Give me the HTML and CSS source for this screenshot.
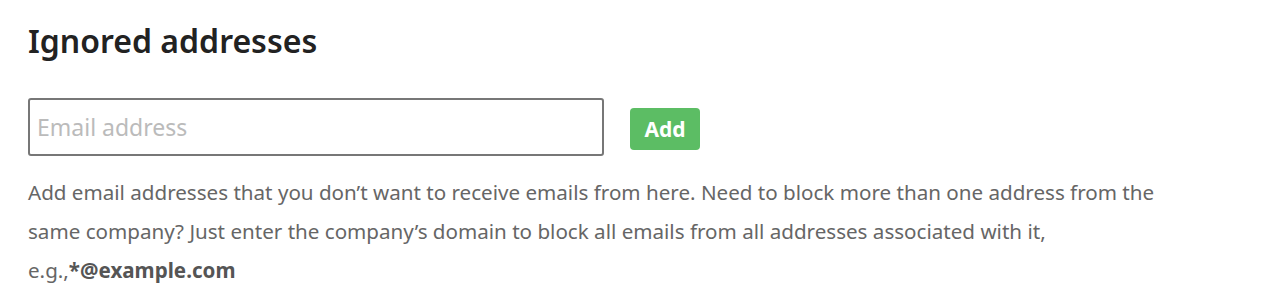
FILE: index.html
```html
<!DOCTYPE html>
<html>
<head>
<meta charset="utf-8">
<link rel="stylesheet" href="styles.css">
</head>
<body>
<div class="section">
  <h2 class="title">Ignored addresses</h2>
  <div class="add-row">
    <input class="email-input" type="text" placeholder="Email address">
    <button class="add-btn" type="button">Add</button>
  </div>
  <p class="help">Add email addresses that you don’t want to receive emails from here. Need to block more than one address from the same company? Just enter the company’s domain to block all emails from all addresses associated with it, e.g.,<strong>*@example.com</strong></p>
</div>
</body>
</html>
```

FILE: styles.css
```css
html, body {
  margin: 0;
  padding: 0;
  background: #ffffff;
}
body {
  font-family: "Noto Sans", "Open Sans", sans-serif;
}
.section {
  padding: 19px 28px 0 28px;
  width: 1150px;
}
.title {
  margin: 0;
  font-size: 32px;
  line-height: 44px;
  font-weight: 600;
  color: #222222;
}
.add-row {
  display: flex;
  align-items: center;
  margin-top: 35px;
}
.email-input {
  box-sizing: border-box;
  width: 576px;
  height: 58px;
  border: 2px solid #777777;
  border-radius: 3px;
  padding: 0 7px;
  font-family: "Noto Sans", sans-serif;
  font-size: 23px;
  color: #333333;
  outline: none;
}
.email-input::placeholder {
  color: #bbbbbb;
}
.add-btn {
  margin-left: 26px;
  margin-top: 4px;
  box-sizing: border-box;
  width: 70px;
  height: 42px;
  border: none;
  border-radius: 4px;
  background: #5cbd64;
  color: #ffffff;
  font-family: "Noto Sans", sans-serif;
  font-weight: 700;
  font-size: 21px;
  padding: 0;
}
.help {
  margin: 17px 0 0 0;
  font-size: 20.6px;
  line-height: 39px;
  color: #666666;
}
.help strong {
  font-weight: 700;
  color: #555555;
}
```
